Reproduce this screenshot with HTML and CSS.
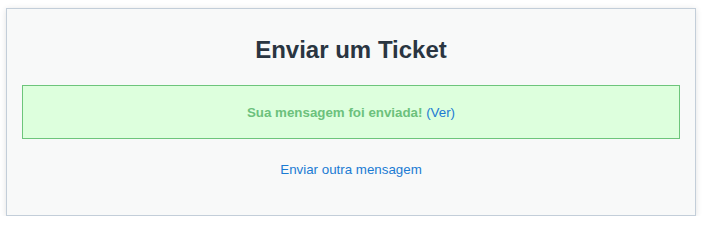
FILE: index.html
```html
<!DOCTYPE html>
<html lang="pt">
<head>
    <meta charset="UTF-8">
    <title>Enviar um Ticket</title>
    <link rel="stylesheet" href="styles.css">
</head>
<body>

<div class="ticket-card">
    <h1>Enviar um Ticket</h1>

    <div class="alert-success">
        Sua mensagem foi enviada! <a href="#">(Ver)</a>
    </div>

    <div class="another">
        <a href="#">Enviar outra mensagem</a>
    </div>
</div>

</body>
</html>
```

FILE: styles.css
```css
body {
    font-family: 'Liberation Sans', Arial, sans-serif;
    margin: 0;
    padding: 8px 9px 0 6px;
    background-color: #fff;
    color: #333;
}
a {
    color: #1b7bd3;
    text-decoration: none;
}
.ticket-card {
    background-color: #f8f9f9;
    border: 1px solid #c3ced9;
    box-shadow: 0 1px 6px rgba(0, 0, 0, 0.12);
    padding: 27px 15px 37px;
    box-sizing: border-box;
    height: 208px;
}
.ticket-card h1 {
    margin: 0 0 21px;
    font-size: 24px;
    line-height: 28px;
    text-align: center;
    color: #2a3541;
}
.alert-success {
    background-color: #dfd;
    border: 1px solid #6dc57b;
    padding: 18px 10px 17px;
    font-size: 13.33px;
    line-height: 17px;
    font-weight: bold;
    color: #6cc17c;
    text-align: center;
}
.alert-success a {
    font-weight: normal;
}
.another {
    margin-top: 22px;
    font-size: 13.33px;
    line-height: 17px;
    text-align: center;
}
```
